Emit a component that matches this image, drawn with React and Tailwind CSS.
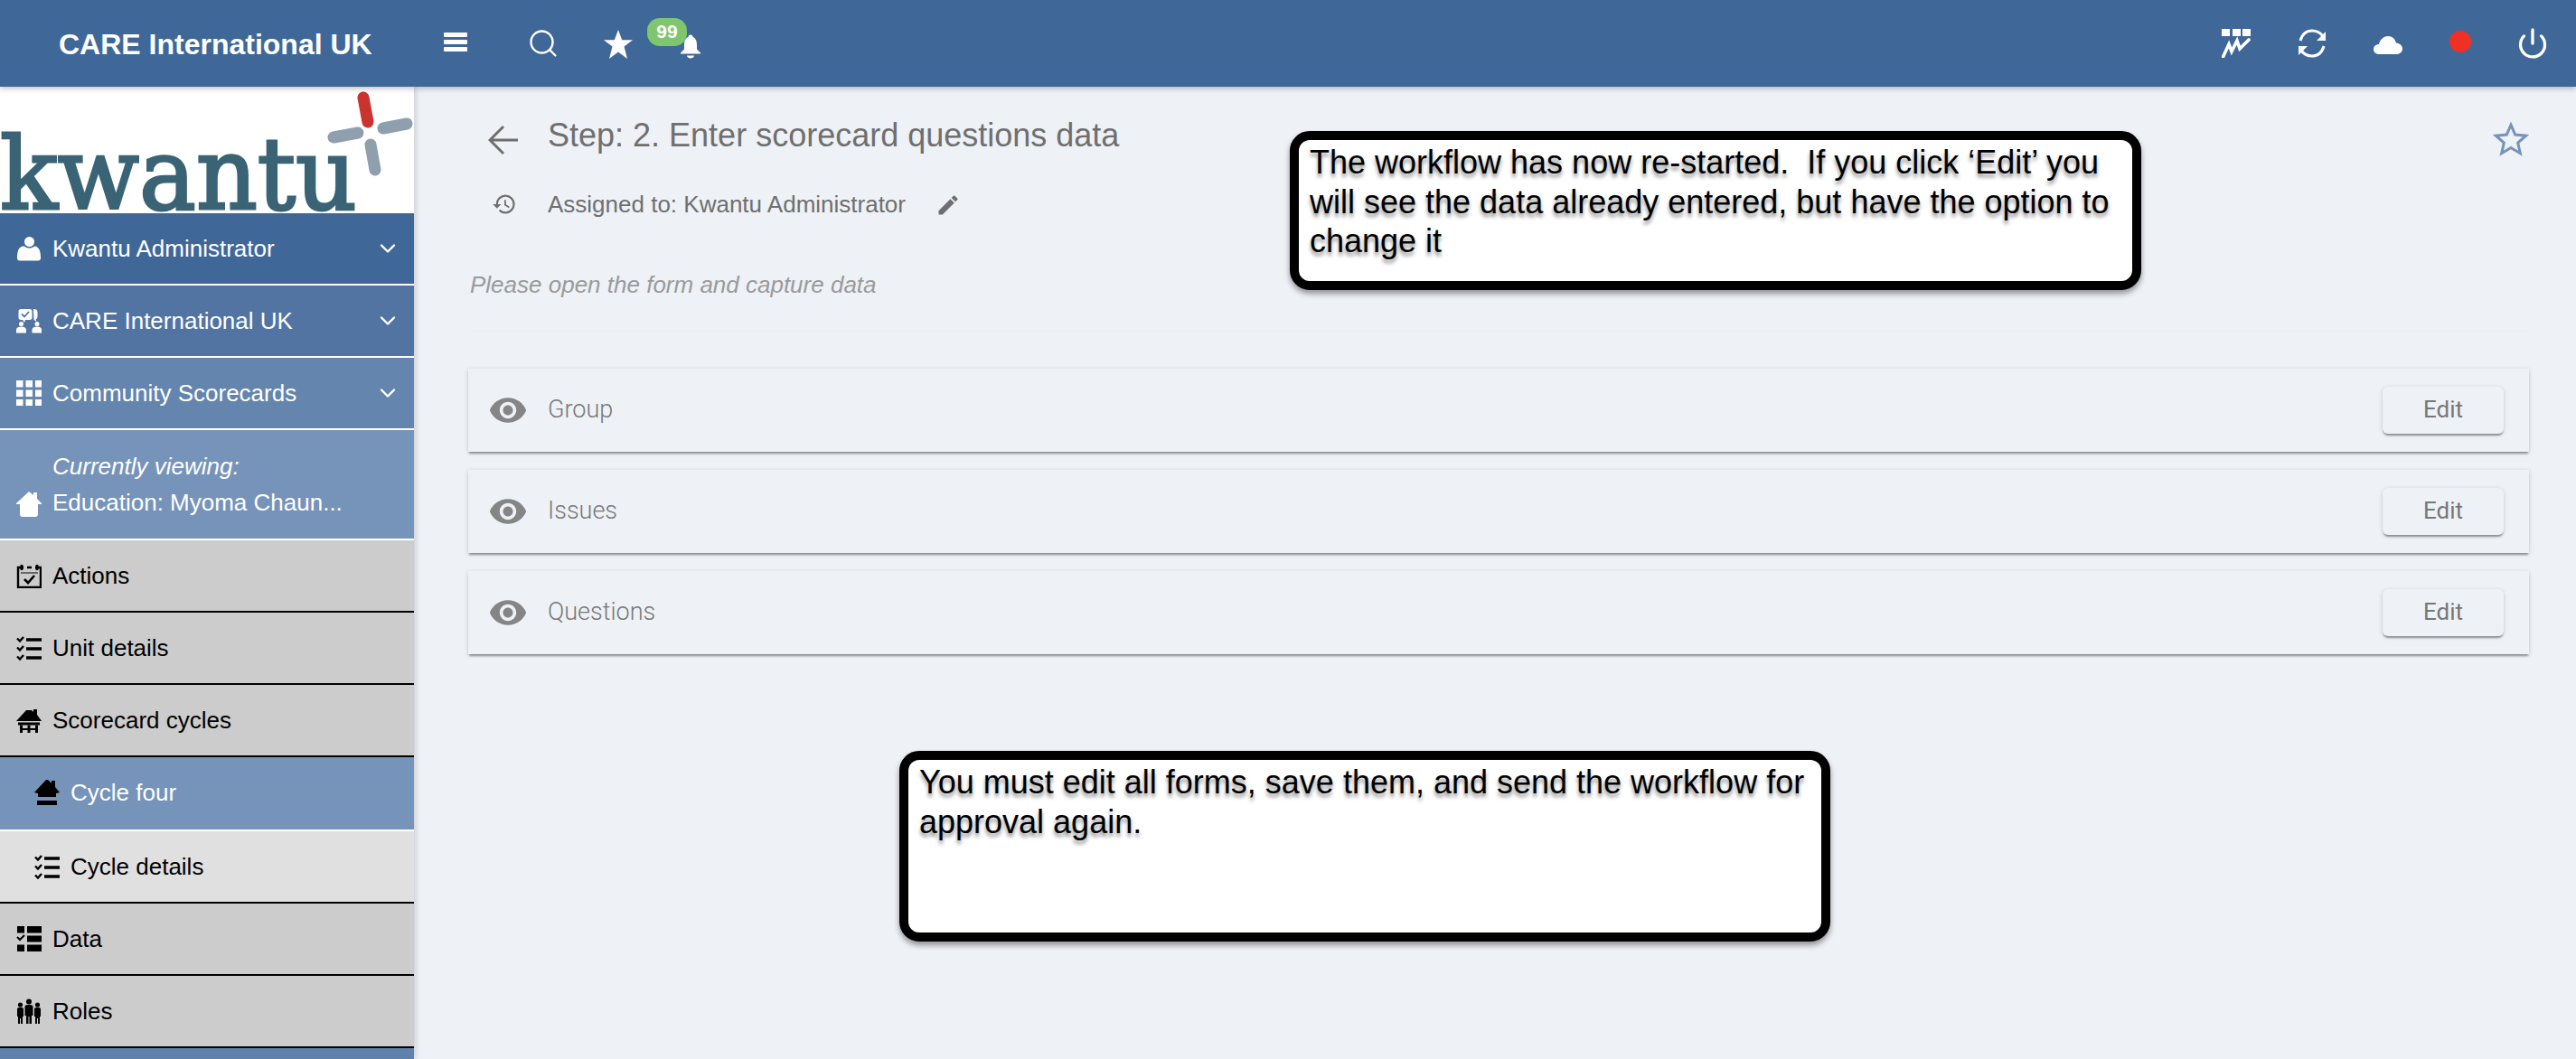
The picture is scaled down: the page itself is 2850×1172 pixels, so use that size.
import { Search, Power } from "lucide-react";

function Chevron() {
  return (
    <svg className="w-[18px] h-[12px] ml-auto mr-[20px]" viewBox="0 0 18 12" fill="none" stroke="white" strokeWidth="2.4" strokeLinecap="round" strokeLinejoin="round">
      <path d="M2 2.5 9 9.5 16 2.5" />
    </svg>
  );
}

// sidebar icons, all in a 28x28 box
function PersonIcon() {
  return (
    <svg viewBox="0 0 28 28" className="w-7 h-7 shrink-0" fill="currentColor">
      <circle cx="14.500" cy="6.500" r="5.500" />
      <path d="M9 11.500c1.500 1.500 3.500 2 5.500 2s4-.5 5.500-2c3 0 5 2 6 5 .8 2.500 1 5 1 8 0 2-1 3-3 3H4c-2 0-3-1-3-3 0-3 .2-5.500 1-8 1-3 3-5 7-5z" />
    </svg>
  );
}

function TeamIcon() {
  return (
    <svg viewBox="0 0 28 28" className="w-7 h-7 shrink-0" fill="currentColor">
      <path d="M5 1h10c1.500 0 2.500 1 2.500 2.500v7c0 1.500-1 2.500-2.500 2.500h-5l-1 3-2-3H5c-1.500 0-2.500-1-2.500-2.500v-7C2.500 2 3.500 1 5 1z" />
      <path d="M6 6.500l3 3 5-5.500" fill="none" stroke="#5274a2" strokeWidth="1.800" />
      <path d="M19 1h1c2 0 3.500 1.500 3.500 3.500v5c0 1.500-1 2.500-2 3l1 2.500-3-2z" />
      <circle cx="5.500" cy="17.500" r="2.500" />
      <circle cx="23" cy="17.500" r="2.500" />
      <path d="M0 27.500V24c0-2 2-3.500 5.500-3.500S11 22 11 24v3.500zM17.500 27.500V24c0-2 2-3.500 5.500-3.500s5 1.500 5 3.500v3.500z" />
    </svg>
  );
}

function GridIcon() {
  const cells = [0, 10.5, 21];
  return (
    <svg viewBox="0 0 28 28" className="w-7 h-7 shrink-0" fill="currentColor">
      {cells.map((y) => cells.map((x) => <rect key={x + "-" + y} x={x} y={y} width="7.5" height="7.5" />))}
    </svg>
  );
}

function HouseIcon() {
  return (
    <svg viewBox="0 0 28 28" className="w-7 h-7 shrink-0" fill="currentColor">
      <path d="M14 0l5 4V1h4v7l5 5v1h-4v11c0 2-1 3-3 3H7c-2 0-3-1-3-3V14H0v-1z" />
    </svg>
  );
}

function CalendarCheckIcon() {
  return (
    <svg viewBox="0 0 28 28" className="w-7 h-7 shrink-0" fill="none" stroke="currentColor">
      <path d="M8 5H2v22h25V5h-6M12 5h5" strokeWidth="2.400" />
      <path d="M6 3.500v3M23 3.500v3" strokeWidth="3.400" strokeLinecap="round" />
      <path d="M5 11h19" strokeWidth="1" />
      <path d="M9 18l4 4 7-8" strokeWidth="2.600" />
    </svg>
  );
}

function ChecklistIcon() {
  return (
    <svg viewBox="0 0 28 28" className="w-7 h-7 shrink-0" fill="none" stroke="currentColor">
      <path d="M1 3.500l3 3 4-4.500M1 13.500l3 3 4-4.500M1 23.500l3 3 4-4.500" strokeWidth="2.400" />
      <path d="M11 5h17M11 15h17M11 25h17" strokeWidth="3.400" />
    </svg>
  );
}

function RoofTableIcon() {
  return (
    <svg viewBox="0 0 28 28" className="w-7 h-7 shrink-0" fill="currentColor">
      <path d="M0 15 11 3h6l2 2V2h4v6l5 7z" />
      <rect x="2" y="16.500" width="24" height="3" />
      <rect x="4" y="23" width="20" height="2" />
      <rect x="4" y="19.500" width="3" height="8.500" />
      <rect x="12.500" y="19.500" width="3" height="8.500" />
      <rect x="21" y="19.500" width="3" height="8.500" />
    </svg>
  );
}

function RoofIcon() {
  return (
    <svg viewBox="0 0 28 28" className="w-7 h-7 shrink-0" fill="currentColor">
      <path d="M0 14 13 0h2l4 4V1h4v7l5 6-4 1v4H4v-4z" />
      <rect x="3" y="23" width="22" height="5" />
    </svg>
  );
}

function DataIcon() {
  return (
    <svg viewBox="0 0 28 28" className="w-7 h-7 shrink-0" fill="currentColor">
      <rect x="1" y="0" width="8" height="7.500" />
      <rect x="1" y="20.500" width="8" height="7.500" />
      <path d="M1 12l3 3 5-5" fill="none" stroke="currentColor" strokeWidth="2" />
      <rect x="12" y="0" width="16" height="7.500" />
      <rect x="12" y="10.500" width="16" height="7" />
      <rect x="12" y="20.500" width="16" height="7.500" />
    </svg>
  );
}

function FamilyIcon() {
  return (
    <svg viewBox="0 0 28 28" className="w-7 h-7 shrink-0" fill="currentColor">
      <circle cx="4.500" cy="7" r="2.600" />
      <circle cx="14" cy="3.500" r="3" />
      <circle cx="23.500" cy="7" r="2.600" />
      <path d="M1 11.500c0-1 1-1.500 3.500-1.500s3.500.5 3.500 1.500V20H7v8H5v-6H4v6H2v-8H1zM9.500 9c0-1.500 2-2 4.500-2s4.500.5 4.500 2v10h-1.500v9h-2.500v-8h-1v8H11v-9H9.500zM20 11.500c0-1 1-1.500 3.500-1.500s3.500.5 3.500 1.500V20h-1v8h-2v-6h-1v6h-2v-8h-1z" />
    </svg>
  );
}

function SideRow({ icon, label, bg, text = "text-black", line = "border-black", chevron, sub, size = "h-[80px]" }) {
  return (
    <div className={`${size} shrink-0 flex items-center border-b-2 ${bg} ${text} ${line} ${sub ? "pl-[38px]" : "pl-[18px]"}`}>
      {icon}
      <span className="ml-[12px] text-[26px] leading-none">{label}</span>
      {chevron && <Chevron />}
    </div>
  );
}

function Sidebar() {
  return (
    <aside className="w-[458px] shrink-0 flex flex-col shadow-[2px_0_6px_rgba(0,0,0,0.15)] z-10 overflow-hidden">
      <div className="h-[140px] shrink-0 bg-white">
        <svg viewBox="0 0 458 140" className="w-[458px] h-[140px] overflow-visible">
          <text x="0" y="134.500" fontFamily="'DejaVu Serif', serif" fontWeight="400" fontSize="110" fill="#3a6475" stroke="#3a6475" strokeWidth="3" textLength="395" lengthAdjust="spacingAndGlyphs">kwantu</text>
          <g fill="none" strokeWidth="13" strokeLinecap="round">
            <path d="M402 12 407 39" stroke="#c9342e" />
            <path d="M424 46 450 41" stroke="#8f9fae" />
            <path d="M369 56 396 51" stroke="#8f9fae" />
            <path d="M410 64 415 92" stroke="#8f9fae" />
          </g>
        </svg>
      </div>
      <SideRow icon={<PersonIcon />} label="Kwantu Administrator" bg="bg-[#3f6899]" text="text-white" line="border-white" chevron />
      <SideRow icon={<TeamIcon />} label="CARE International UK" bg="bg-[#5274a2]" text="text-white" line="border-white" chevron />
      <SideRow icon={<GridIcon />} label="Community Scorecards" bg="bg-[#6485ad]" text="text-white" line="border-white" chevron />
      <div className="h-[122px] shrink-0 flex items-end pl-[18px] pb-[24px] bg-[#7693b9] text-white border-b-2 border-white">
        <HouseIcon />
        <div className="ml-[12px] -mb-[4px] text-[26px] leading-[40px]">
          <div className="italic">Currently viewing:</div>
          <div>Education: Myoma Chaun...</div>
        </div>
      </div>
      <SideRow icon={<CalendarCheckIcon />} label="Actions" bg="bg-[#cccccc]" />
      <SideRow icon={<ChecklistIcon />} label="Unit details" bg="bg-[#cccccc]" />
      <SideRow icon={<RoofTableIcon />} label="Scorecard cycles" bg="bg-[#cccccc]" />
      <SideRow icon={<RoofIcon />} label={<span className="text-white">Cycle four</span>} bg="bg-[#7693b9]" line="border-white" sub size="h-[82px] pb-[2px]" />
      <SideRow icon={<ChecklistIcon />} label="Cycle details" bg="bg-[#e0e0e0]" sub />
      <SideRow icon={<DataIcon />} label="Data" bg="bg-[#cccccc]" />
      <SideRow icon={<FamilyIcon />} label="Roles" bg="bg-[#cccccc]" />
      <div className="flex-1 bg-[#5f81ab]" />
    </aside>
  );
}

function TopBar() {
  return (
    <header className="h-24 shrink-0 flex items-center bg-[#3f6899] text-white shadow-[0_2px_6px_rgba(0,0,0,0.25)] z-20">
      <div className="w-[491px] shrink-0 pl-[65px] text-[32px] font-bold leading-none mt-[2px]">CARE International UK</div>
      <div className="flex flex-col gap-[3px] w-[26px] -mt-[4px]">
        <span className="h-[5px] rounded-[1px] bg-white" />
        <span className="h-[5px] rounded-[1px] bg-white" />
        <span className="h-[5px] rounded-[1px] bg-white" />
      </div>
      <Search className="ml-[66px] w-[36px] h-[36px]" strokeWidth={1.6} />
      <svg viewBox="0 0 32 32" className="ml-[49px] w-8 h-8 mt-[2px]" fill="white">
        <path d="M16 0l4.200 11.200H32l-9.500 7.300L26 32l-10-7.600L6 32l3.500-13.500L0 11.200h11.800z" />
      </svg>
      <div className="relative w-[76px] h-[76px] ml-[16px]">
        <span className="absolute left-0 top-[10px] w-[44px] h-[31px] rounded-[14px] bg-[#7fc66f] text-[21px] font-bold leading-[30px] text-center">99</span>
        <svg viewBox="0 0 24 26" className="absolute left-[36px] top-[28px] w-[24px] h-[27px]" fill="white">
          <circle cx="12" cy="2.500" r="2.500" />
          <path d="M12 2c5 0 7 4 7 9v5l4 4v1H1v-1l4-4v-5c0-5 2-9 7-9z" />
          <path d="M8 23h8c0 2-2 3-4 3s-4-1-4-3z" />
        </svg>
      </div>
      <div className="ml-auto flex items-center">
        <svg viewBox="0 0 32 32" className="w-8 h-8" fill="white">
          <rect x="0" y="0" width="9" height="8" />
          <rect x="12" y="0" width="9" height="8" />
          <rect x="23" y="0" width="9" height="8" />
          <path d="M1.500 31 8 17l3 8 6-12 3 9 10-10" fill="none" stroke="white" strokeWidth="3.600" strokeLinecap="round" />
        </svg>
        <svg viewBox="0 0 32 32" className="ml-[52px] w-8 h-8" fill="none" stroke="white" strokeWidth="3">
          <path d="M3 13C5 6 10 2 16 2c5 0 9 2 12 6" />
          <path d="M29 19c-2 7-7 11-13 11-5 0-9-2-12-6" />
          <path d="M31 3v10H21zM1 29V19h10z" fill="white" stroke="none" />
        </svg>
        <svg viewBox="0 0 32 20" className="ml-[52px] w-8 h-5 mt-[4px]" fill="white">
          <path d="M6 20c-3.500 0-6-2.400-6-5.500S2.500 9 6 9c1-5 5-9 10-9 4.500 0 8 3 9 7.500 4 .3 7 3 7 6.500 0 3.500-3 6-6.500 6z" />
        </svg>
        <span className="ml-[52px] w-6 h-6 rounded-full bg-[#ee3124] -mt-[4px]" />
        <Power className="ml-[50px] mr-[30px] w-[36px] h-[36px]" strokeWidth={2.2} />
      </div>
    </header>
  );
}

function FormCard({ label }) {
  return (
    <div className="h-[92px] flex items-center pl-[24px] pr-[28px] bg-[#eef1f6] shadow-[0_3px_2px_-1px_rgba(0,0,0,0.35),0_1px_5px_rgba(0,0,0,0.16)]">
      <svg viewBox="0 0 24 24" className="w-[44px] h-[44px] -ml-[2px]" fill="#858585">
        <path d="M12 4.500C7 4.500 2.730 7.610 1 12c1.730 4.390 6 7.500 11 7.500s9.270-3.110 11-7.500c-1.730-4.390-6-7.500-11-7.500zM12 17c-2.760 0-5-2.240-5-5s2.240-5 5-5 5 2.240 5 5-2.240 5-5 5zm0-8c-1.660 0-3 1.340-3 3s1.340 3 3 3 3-1.340 3-3-1.340-3-3-3z" />
      </svg>
      <span className="ml-[22px] text-[27px] font-light text-[#777777] font-['Roboto',sans-serif] leading-none -mt-[2px]">{label}</span>
      <button className="ml-auto w-[134px] h-[52px] pb-[2px] rounded-[6px] bg-[#eef1f6] text-[26px] text-[#777777] font-['Roboto',sans-serif] shadow-[0_3px_2px_-1px_rgba(0,0,0,0.35),0_1px_5px_rgba(0,0,0,0.16)]">Edit</button>
    </div>
  );
}

function Callout({ className, children }) {
  return (
    <div className={`absolute bg-white border-[10px] border-black rounded-[22px] shadow-[0_4px_6px_rgba(0,0,0,0.4)] pl-[12px] pt-[3px] text-[36px] leading-[43.500px] text-black [text-shadow:0_4px_4px_rgba(0,0,0,0.45)] ${className}`}>
      {children}
    </div>
  );
}

export default function App() {
  return (
    <div className="w-[2850px] h-[1172px] flex flex-col overflow-hidden bg-[#eef1f6] font-['Liberation_Sans',sans-serif]">
      <TopBar />
      <div className="flex-1 flex min-h-0">
        <Sidebar />
        <main className="relative flex-1 pl-[60px] pr-[52px] pt-[32px]">
          <div className="h-[44px] flex items-center pl-[22px]">
            <svg viewBox="0 0 34 34" className="w-[34px] h-[34px] mt-[10px]" fill="none" stroke="#6f6f6f" strokeWidth="3">
              <path d="M33 17H2M17 2 2 17l15 15" />
            </svg>
            <h1 className="ml-[32px] text-[36px] font-normal leading-none text-[#6f6f6f]">Step: 2. Enter scorecard questions data</h1>
            <svg viewBox="0 0 24 24" className="ml-auto w-[40px] h-[40px] mt-[8px]" fill="none" stroke="#7693b9" strokeWidth="1.800">
              <path d="M12 2.500l2.800 6.500 7.200.7-5.400 4.700 1.600 7-6.200-3.700-6.200 3.700 1.600-7L2 9.700 9.200 9z" />
            </svg>
          </div>
          <div className="h-[36px] mt-[36px] flex items-center pl-[26px]">
            <svg viewBox="0 0 24 24" className="w-[28px] h-[28px]" fill="#6f6f6f">
              <path d="M13 3a9 9 0 0 0-9 9H1l3.890 3.890.07.14L9 12H6c0-3.870 3.130-7 7-7s7 3.130 7 7-3.130 7-7 7c-1.930 0-3.680-.79-4.940-2.060l-1.420 1.420A8.954 8.954 0 0 0 13 21a9 9 0 0 0 0-18zm-1 5v5l4.280 2.540.72-1.210-3.500-2.080V8H12z" />
            </svg>
            <span className="ml-[34px] text-[26px] leading-none text-[#6f6f6f]">Assigned to: Kwantu Administrator</span>
            <svg viewBox="0 0 24 24" className="ml-[33px] mt-[2px] w-[28px] h-[28px]" fill="#6f6f6f">
              <path d="M3 17.250V21h3.750L17.810 9.940l-3.750-3.750L3 17.250zM20.710 7.040a1 1 0 0 0 0-1.410l-2.340-2.340a1 1 0 0 0-1.410 0l-1.830 1.830 3.750 3.750 1.830-1.830z" />
            </svg>
          </div>
          <p className="h-[36px] mt-[53px] pl-[2px] flex items-center text-[26px] italic text-[#9a9a9a]">Please open the form and capture data</p>
          <div className="mt-[33px] h-px bg-[#ebeef3]" />
          <div className="mt-[41px] flex flex-col gap-[20px]">
            <FormCard label="Group" />
            <FormCard label="Issues" />
            <FormCard label="Questions" />
          </div>
          <Callout className="left-[969px] top-[49px] w-[942px] h-[176px]">
            The workflow has now re-started.&nbsp; If you click ‘Edit’ you will see the data already entered, but have the option to change it
          </Callout>
          <Callout className="left-[537px] top-[735px] w-[1030px] h-[211px]">
            You must edit all forms, save them, and send the workflow for approval again.
          </Callout>
        </main>
      </div>
    </div>
  );
}
